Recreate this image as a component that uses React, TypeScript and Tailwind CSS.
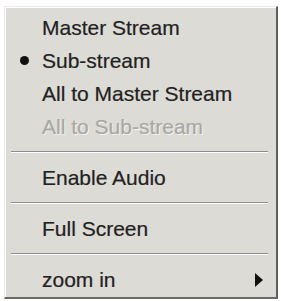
import React from "react";

type Item =
  | { kind: "item"; label: string; checked?: boolean; disabled?: boolean; submenu?: boolean }
  | { kind: "sep" };

const items: Item[] = [
  { kind: "item", label: "Master Stream" },
  { kind: "item", label: "Sub-stream", checked: true },
  { kind: "item", label: "All to Master Stream" },
  { kind: "item", label: "All to Sub-stream", disabled: true },
  { kind: "sep" },
  { kind: "item", label: "Enable Audio" },
  { kind: "sep" },
  { kind: "item", label: "Full Screen" },
  { kind: "sep" },
  { kind: "item", label: "zoom in", submenu: true },
];

const App = () => {
  return (
    <div className="w-[281px] h-[301px] bg-white pt-[6px] pl-[4px] font-['Liberation_Sans',Arial,sans-serif]">
      {/* menu frame: classic 3D border */}
      <div className="w-[274px] h-[293px] border-t border-l border-t-[#ecebe6] border-l-[#ecebe6] border-r-2 border-b-2 border-r-[#5f5f5c] border-b-[#6a6a66] bg-[#dcdbd6]">
        <div className="h-full border-t border-l border-white pt-[3px] pr-[3px]">
          {items.map((it, i) =>
            it.kind === "sep" ? (
              <div key={i} className="h-[18px] flex flex-col justify-center px-[5px]">
                <div className="h-px bg-[#8e8d89]" />
                <div className="h-px bg-white" />
              </div>
            ) : (
              <div
                key={i}
                className={`h-[33px] flex items-center relative pl-[36px] text-[21px] [-webkit-text-stroke:0.2px_currentColor] ${
                  it.disabled ? "text-[#a9a8a4]" : "text-[#222221]"
                }`}
              >
                {it.checked && (
                  <span className="absolute left-[14px] top-[12px] w-[9px] h-[9px] rounded-full bg-[#111]" />
                )}
                <span className={it.disabled ? "[text-shadow:1px_1px_0_#f4f4f0]" : ""}>{it.label}</span>
                {it.submenu && (
                  <svg className="absolute left-[248px] top-[9px]" width="10" height="16" viewBox="0 0 10 16">
                    <polygon points="1,1 9,8 1,15" fill="#111" />
                  </svg>
                )}
              </div>
            )
          )}
        </div>
      </div>
    </div>
  );
};

export default App;
